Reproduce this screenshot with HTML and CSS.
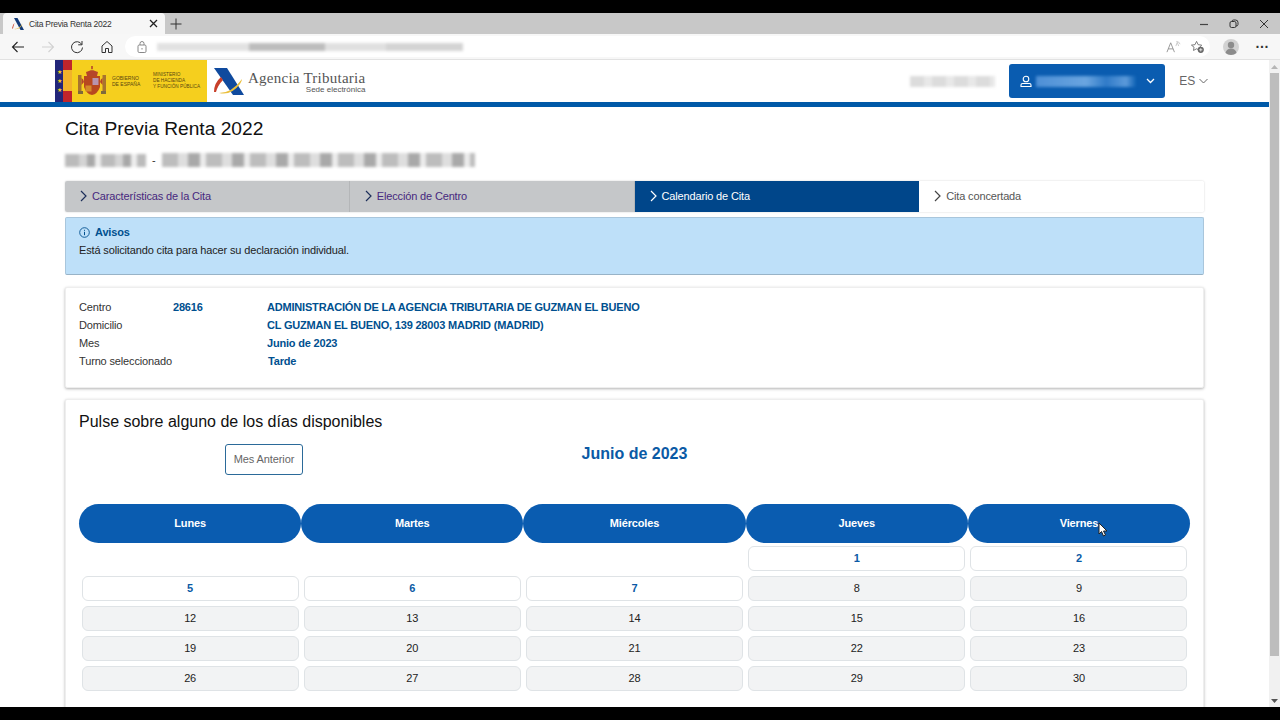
FILE: index.html
```html
<!DOCTYPE html>
<html lang="es">
<head>
  <meta charset="utf-8">
  <title>Cita Previa Renta 2022</title>
  <link rel="stylesheet" href="styles.css">
</head>
<body>
  <div class="window">

    <!-- browser tabs -->
    <div class="tabbar">
      <div class="tab">
        <svg class="favicon" width="14" height="14" viewBox="0 0 14 14">
          <path d="M3 1h3.500l6.500 12H9.500z" fill="#123a78"/>
          <path d="M1 11.500q.3-3.500 2.500-5.500-1 3-1.500 5.500z" fill="#c8452f"/>
          <path d="M3 12q5 0 8.500-5.500-2 6.500-8.500 5.500z" fill="#e8b93a"/>
        </svg>
        <span class="tab-title">Cita Previa Renta 2022</span>
        <svg class="tab-close" width="9" height="9" viewBox="0 0 9 9"><path d="M1 1l7 7M8 1l-7 7" stroke="#222" stroke-width="1.300"/></svg>
      </div>
      <svg class="tab-new" width="12" height="12" viewBox="0 0 12 12"><path d="M6 .5v11M.5 6h11" stroke="#333" stroke-width="1"/></svg>
      <div class="win-controls">
        <svg width="10" height="10" viewBox="0 0 10 10"><path d="M1 5.500h8" stroke="#444" stroke-width="1.200"/></svg>
        <svg width="10" height="10" viewBox="0 0 10 10"><rect x="1" y="2.500" width="6" height="6" rx="1.500" fill="none" stroke="#333"/><path d="M3 2.500q0-1.500 1.500-1.500h2q2.500 0 2.500 2.500v2q0 1.500-2 1.500" fill="none" stroke="#333"/></svg>
        <svg width="10" height="10" viewBox="0 0 10 10"><path d="M1 1l8 8M9 1l-8 8" stroke="#333" stroke-width="1"/></svg>
      </div>
    </div>

    <!-- browser toolbar -->
    <div class="toolbar">
      <div class="nav-icons">
        <svg width="14" height="14" viewBox="0 0 14 14"><path d="M13 7H1.500M6.500 2L1.500 7l5 5" fill="none" stroke="#222" stroke-width="1.100"/></svg>
        <svg width="14" height="14" viewBox="0 0 14 14"><path d="M1 7h11.500M7.500 2l5 5-5 5" fill="none" stroke="#d2d2d2" stroke-width="1.100"/></svg>
        <svg width="14" height="14" viewBox="0 0 14 14"><path d="M11.800 4.500A5.500 5.500 0 1 0 12.500 7.500M12 1v3.800H8.200" fill="none" stroke="#333" stroke-width="1"/></svg>
        <svg width="14" height="14" viewBox="0 0 14 14"><path d="M2 6l5-4.500L12 6v6.500H8.500V8.500h-3v4H2z" fill="none" stroke="#333" stroke-width="1" stroke-linejoin="round"/></svg>
      </div>
      <div class="addressbar">
        <svg width="10" height="12" viewBox="0 0 10 12"><rect x="1" y="4" width="8" height="7.500" rx="1.200" fill="none" stroke="#888"/><path d="M3 4V2.500q0-2 2-2t2 2V4" fill="none" stroke="#888"/><path d="M5 7v1.500" stroke="#888"/></svg>
        <div class="blur blur-url"></div>
        <div class="addr-right">
          <svg width="15" height="14" viewBox="0 0 16 14"><path d="M1 12.500L5 2.500l4 10M2.500 9h5" fill="none" stroke="#888" stroke-width=".9"/><path d="M10.500 6l1.500-4 1.500 4M11 1q3 0 4 3" fill="none" stroke="#bbb" stroke-width=".8"/></svg>
          <svg width="15" height="14" viewBox="0 0 16 15"><path d="M7 1.500l1.700 3.500 3.800.5-2.700 2.700.5 2.800-3.300-1.600-3.300 1.800.6-3.500L1.500 5.500l3.800-.5z" fill="none" stroke="#666" stroke-width=".9"/><circle cx="11.500" cy="10.500" r="3.300" fill="#666"/><path d="M11.500 8.700v3.600M9.700 10.500h3.600" stroke="#fff" stroke-width=".8"/></svg>
        </div>
      </div>
      <svg class="avatar" width="16" height="16" viewBox="0 0 16 16"><circle cx="8" cy="8" r="8" fill="#d2d2d2"/><circle cx="8" cy="6" r="3.200" fill="#8c8c8c"/><path d="M2.500 14q1-4.500 5.500-4.500t5.500 4.500q-2.500 2-5.500 2t-5.500-2z" fill="#8c8c8c"/></svg>
      <span class="more">&middot;&middot;&middot;</span>
    </div>

    <div class="viewport">
      <div class="page">

        <header class="site-header">
          <div class="gov-logo">
            <div class="flag"><span class="eu">
              <i>&#9733;</i><i>&#9733;</i><i>&#9733;</i></span><span class="stripes"></span></div>
            <svg class="arms" width="28" height="30" viewBox="0 0 28 30">
              <path d="M10 6q4-5 8 0l1 3H9z" fill="#c9842c"/>
              <path d="M13.200 0h1.600v3h-1.600z" fill="#b5452a"/>
              <path d="M8 6q6-3 12 0l-1 4H9z" fill="#b5452a"/>
              <rect x="0" y="9" width="3.500" height="16" fill="#a8742e"/>
              <rect x="24.500" y="9" width="3.500" height="16" fill="#a8742e"/>
              <path d="M3.500 12q2 1 2.500 4l-2.500 3zM24.500 12q-2 1-2.500 4l2.500 3z" fill="#b5452a"/>
              <path d="M6 10h16v11q-2.500 7-8 8-5.500-1-8-8z" fill="#b8481f"/>
              <rect x="14.500" y="12" width="6" height="7" fill="#b894ad"/>
              <rect x="7.500" y="19.500" width="6" height="6" fill="#d48a2a"/>
              <rect x="0" y="25" width="5" height="3" fill="#7d6a3c"/>
              <rect x="23" y="25" width="5" height="3" fill="#7d6a3c"/>
            </svg>
            <div class="gov-text gov-es">GOBIERNO<br>DE ESPAÑA</div>
            <div class="gov-text gov-min">MINISTERIO<br>DE HACIENDA<br>Y FUNCIÓN PÚBLICA</div>
          </div>
          <div class="aeat-logo">
            <svg width="32" height="30" viewBox="0 0 32 30">
              <path d="M1 2h13l17 27H20z" fill="#0f4a9e"/>
              <path d="M1 26q0-9 7-15l2 3q-5 5-7 12z" fill="#c8402a"/>
              <path d="M6 27q13 0 23-14 0 2-2 5-9 12-21 9z" fill="#eabf3c"/>
            </svg>
            <div class="aeat-text">
              <span class="aeat-name">Agencia Tributaria</span>
              <span class="aeat-sub">Sede electrónica</span>
            </div>
          </div>
          <div class="header-right">
            <div class="blur blur-user"></div>
            <div class="user-btn">
              <svg width="12" height="13" viewBox="0 0 12 13"><circle cx="6" cy="4" r="2.800" fill="none" stroke="#fff" stroke-width="1.100"/><path d="M2.500 8.500h7q1.500 0 1.500 1.500v1.500H1V10q0-1.500 1.500-1.500z" fill="none" stroke="#fff" stroke-width="1.100"/></svg>
              <div class="blur blur-name"></div>
              <svg class="chev" width="9" height="6" viewBox="0 0 9 6"><path d="M1 1l3.500 3.500L8 1" fill="none" stroke="#fff" stroke-width="1.300"/></svg>
            </div>
            <div class="lang">ES
              <svg width="9" height="6" viewBox="0 0 9 6"><path d="M.5 1l4 4 4-4" fill="none" stroke="#666" stroke-width="1"/></svg>
            </div>
          </div>
        </header>

        <main class="content">
          <h1 class="page-title">Cita Previa Renta 2022</h1>
          <div class="subject">
            <div class="blur blur-id"></div>
            <span>-</span>
            <div class="blur blur-desc"></div>
          </div>

          <nav class="steps">
            <a class="step done">
              <svg width="7" height="12" viewBox="0 0 7 12"><path d="M1 1l5 5-5 5" fill="none" stroke="#1d2f5a" stroke-width="1.200"/></svg>
              Características de la Cita</a>
            <a class="step done">
              <svg width="7" height="12" viewBox="0 0 7 12"><path d="M1 1l5 5-5 5" fill="none" stroke="#1d2f5a" stroke-width="1.200"/></svg>
              Elección de Centro</a>
            <a class="step active">
              <svg width="7" height="12" viewBox="0 0 7 12"><path d="M1 1l5 5-5 5" fill="none" stroke="#fff" stroke-width="1.200"/></svg>
              Calendario de Cita</a>
            <a class="step pending">
              <svg width="7" height="12" viewBox="0 0 7 12"><path d="M1 1l5 5-5 5" fill="none" stroke="#444" stroke-width="1.200"/></svg>
              Cita concertada</a>
          </nav>

          <div class="notice">
            <div class="notice-title">
              <svg width="11" height="11" viewBox="0 0 11 11"><circle cx="5.500" cy="5.500" r="4.800" fill="none" stroke="#00508f" stroke-width=".9"/><path d="M5.500 4.800v3.400M5.500 2.800v1" stroke="#00508f" stroke-width="1"/></svg>
              Avisos
            </div>
            <p>Está solicitando cita para hacer su declaración individual.</p>
          </div>

          <section class="card summary">
            <span>Centro</span><b>28616</b><b>ADMINISTRACIÓN DE LA AGENCIA TRIBUTARIA DE GUZMAN EL BUENO</b>
            <span>Domicilio</span><b></b><b>CL GUZMAN EL BUENO, 139 28003 MADRID (MADRID)</b>
            <span>Mes</span><b></b><b>Junio de 2023</b>
            <span>Turno seleccionado</span><b></b><b class="nudge">Tarde</b>
          </section>

          <section class="card calendar">
            <h2 class="cal-prompt">Pulse sobre alguno de los días disponibles</h2>
            <div class="cal-nav">
              <div class="cal-prev"><button class="btn-month">Mes Anterior</button></div>
              <div class="cal-month">Junio de 2023</div>
              <div></div>
            </div>
            <div class="cal-head">
              <div>Lunes</div><div>Martes</div><div>Miércoles</div><div>Jueves</div><div>Viernes</div>
            </div>
            <div class="cal-grid">
              <div class="day empty"></div><div class="day empty"></div><div class="day empty"></div>
              <div class="day free">1</div><div class="day free">2</div>
              <div class="day free">5</div><div class="day free">6</div><div class="day free">7</div>
              <div class="day">8</div><div class="day">9</div>
              <div class="day">12</div><div class="day">13</div><div class="day">14</div>
              <div class="day">15</div><div class="day">16</div>
              <div class="day">19</div><div class="day">20</div><div class="day">21</div>
              <div class="day">22</div><div class="day">23</div>
              <div class="day">26</div><div class="day">27</div><div class="day">28</div>
              <div class="day">29</div><div class="day">30</div>
            </div>
          </section>
        </main>
      </div>

      <div class="scrollbar">
        <svg width="7" height="4" viewBox="0 0 7 4"><path d="M3.500 0L7 4H0z" fill="#b5b5b5"/></svg>
        <div class="thumb"></div>
        <svg width="7" height="4" viewBox="0 0 7 4"><path d="M3.500 4L7 0H0z" fill="#555"/></svg>
      </div>
    </div>

    <!-- mouse pointer from the recording -->
    <svg class="pointer" width="10" height="15" viewBox="0 0 10 15"><path d="M1 1v11l2.500-2.500L5.500 14l2-1-2-4H9z" fill="#fff" stroke="#222" stroke-width="1"/></svg>
  </div>
</body>
</html>
```

FILE: styles.css
```css
* {
  box-sizing: border-box;
}

html, body {
  margin: 0;
  height: 720px;
  overflow: hidden;
  background-color: black;
}

body {
  padding: 13px 0;
  font-family: "Liberation Sans", Arial, sans-serif;
  font-size: 11px;
  letter-spacing: -.15px;
  color: #222;
}

.window {
  position: relative;
  height: 694px;
  display: flex;
  flex-direction: column;
  background-color: white;
  overflow: hidden;
}

/* browser chrome */
.tabbar {
  height: 21px;
  flex: none;
  display: flex;
  align-items: center;
  padding-left: 3px;
  background-color: #c8c8c8;
}

.tab {
  width: 162px;
  height: 21px;
  display: flex;
  align-items: center;
  padding: 0 7px 0 8px;
  background-color: #f6f6f6;
  border-radius: 4px 4px 0 0;
}

.favicon {
  flex: none;
}

.tab-title {
  margin-left: 4px;
  flex: 1;
  font-size: 8.500px;
  letter-spacing: -.25px;
  color: #333;
  white-space: nowrap;
}

.tab-new {
  margin-left: 5px;
}

.win-controls {
  margin-left: auto;
  display: flex;
  gap: 20px;
  padding-right: 11px;
}

.toolbar {
  height: 26px;
  flex: none;
  display: flex;
  align-items: center;
  padding-left: 11px;
  background-color: #f7f7f7;
  border-bottom: 1px solid #e2e2e2;
}

.nav-icons {
  display: flex;
  gap: 15.500px;
}

.addressbar {
  width: 1085px;
  height: 21px;
  margin-left: 11px;
  display: flex;
  align-items: center;
  padding: 0 5px 0 12px;
  background-color: white;
  border-radius: 11px;
}

.addr-right {
  margin-left: auto;
  display: flex;
  gap: 9px;
  align-items: center;
}

.avatar {
  margin-left: 13px;
}

.more {
  margin-left: 17px;
  font-size: 14px;
  font-weight: bold;
  line-height: 14px;
  color: #333;
}

/* blurred-out private data */
.blur {
  filter: blur(1.500px);
}

.blur-url {
  width: 306px;
  height: 8px;
  margin-left: 10px;
  background: linear-gradient(90deg, #e2e2e2 0 30%, #bdbdbd 30% 55%, #e0e0e0 55% 75%, #d4d4d4 75% 100%);
}

.blur-user {
  width: 85px;
  height: 11px;
  background: repeating-linear-gradient(90deg, #dcdcdc 0 14px, #e8e8e8 14px 22px);
}

.blur-name {
  width: 100px;
  height: 11px;
  margin-left: 4px;
  background: linear-gradient(90deg, #4d8fd6, #6aa5e0 50%, #2f7ac8 70%, #5c9ada 90%, #0f62b5);
}

.blur-id {
  width: 81px;
  height: 13px;
  background: repeating-linear-gradient(90deg, #bbb 0 14px, #d4d4d4 14px 22px, #a8a8a8 22px 30px, #eee 30px 36px);
}

.blur-desc {
  width: 313px;
  height: 14px;
  background: repeating-linear-gradient(90deg, #bdbdbd 0 16px, #dedede 16px 26px, #a9a9a9 26px 38px, #ececec 38px 44px);
}

/* page */
.viewport {
  flex: 1;
  min-height: 0;
  display: flex;
}

.page {
  flex: 1;
  min-width: 0;
  overflow: hidden;
}

.scrollbar {
  width: 11px;
  flex: none;
  display: flex;
  flex-direction: column;
  align-items: center;
  padding: 5px 0 4px;
  background-color: #f1f1f1;
}

.thumb {
  width: 9px;
  height: 583px;
  margin: 4px 0 auto;
  background-color: #bdbdbd;
}

.site-header {
  height: 47px;
  display: flex;
  padding-left: 55px;
  border-bottom: 5px solid #0059a8;
}

.gov-logo {
  width: 152px;
  display: flex;
  align-items: center;
  background-color: #f5cf1e;
  letter-spacing: 0;
}

.flag {
  width: 17px;
  height: 100%;
  display: flex;
}

.eu {
  width: 8px;
  display: flex;
  flex-direction: column;
  justify-content: center;
  gap: 3px;
  background-color: #22267a;
  color: #f5cf1e;
  font-size: 6px;
  line-height: 6px;
  text-align: center;
}

.eu i {
  font-style: normal;
}

.stripes {
  flex: 1;
  background: linear-gradient(#c0252b 0 25%, #f2b32a 25% 75%, #c0252b 75%);
}

.arms {
  margin-left: 6px;
}

.gov-text {
  font-size: 5px;
  line-height: 6px;
  color: #5a4710;
}

.gov-es {
  width: 41px;
  margin-left: 6px;
}

.gov-min {
  white-space: nowrap;
  font-size: 4.700px;
}

.aeat-logo {
  display: flex;
  align-items: center;
  gap: 3px;
  margin-left: 6px;
  letter-spacing: 0;
}

.aeat-text {
  margin-top: 3px;
  display: flex;
  flex-direction: column;
  align-items: flex-end;
}

.aeat-name {
  font-family: "Liberation Serif", "Times New Roman", serif;
  font-size: 15px;
  line-height: 15px;
  letter-spacing: .25px;
  color: #555;
}

.aeat-sub {
  font-size: 8px;
  line-height: 8px;
  color: #555;
}

.header-right {
  margin-left: auto;
  display: flex;
  align-items: center;
  padding-right: 61px;
}

.user-btn {
  width: 156px;
  height: 34px;
  margin: 0 0 0 14px;
  display: flex;
  align-items: center;
  padding: 0 10px 0 11px;
  background-color: #0a5cb0;
  border-radius: 3px;
}

.chev {
  margin-left: auto;
}

.lang {
  margin-left: 14px;
  display: flex;
  align-items: center;
  gap: 4px;
  font-size: 12px;
  color: #666;
}

.content {
  width: 1139px;
  margin-left: 65px;
}

.page-title {
  margin: 10px 0 0;
  font-size: 19.200px;
  font-weight: normal;
  line-height: 24px;
  letter-spacing: 0;
  color: #111;
}

.subject {
  height: 16px;
  margin-top: 11px;
  display: flex;
  align-items: center;
  gap: 6px;
  color: #333;
}

.steps {
  height: 31px;
  margin-top: 13px;
  display: grid;
  grid-template-columns: repeat(4, 1fr);
  border-radius: 2px;
  overflow: hidden;
  box-shadow: 0 0 2px rgba(0, 0, 0, .2);
}

.step {
  display: flex;
  align-items: center;
  gap: 5px;
  padding: 0 0 1px 15px;
}

.step.done {
  background-color: #c5c7c9;
  color: #47287e;
  border-right: 1px solid #b4b6b8;
}

.step.active {
  background-color: #00468a;
  color: white;
}

.step.pending {
  background-color: white;
  color: #555;
}

.notice {
  height: 58px;
  margin-top: 5px;
  padding: 7px 13px;
  background-color: #bee0f9;
  border: 1px solid #a9c6dc;
  border-bottom-color: #98b3c7;
  border-radius: 2px;
}

.notice-title {
  display: flex;
  align-items: center;
  gap: 5px;
  font-weight: bold;
  color: #00508f;
  line-height: 14px;
}

.notice p {
  margin: 4px 0 0;
  line-height: 15px;
  color: #222;
}

.card {
  background-color: white;
  border: 1px solid #eee;
  border-radius: 2px;
  box-shadow: 0 1px 3px rgba(0, 0, 0, .3);
}

.summary {
  height: 101px;
  margin-top: 12px;
  display: grid;
  grid-template-columns: 94px 94px 1fr;
  grid-auto-rows: 18px;
  align-items: center;
  padding: 10px 13px;
  white-space: nowrap;
  color: #333;
}

.summary b {
  letter-spacing: -.19px;
  color: #00508f;
}

.summary .nudge {
  padding-left: 1px;
}

.calendar {
  margin-top: 11px;
  padding: 12px 13px 40px;
}

.cal-prompt {
  margin: 0;
  font-size: 16px;
  font-weight: normal;
  line-height: 20px;
  letter-spacing: 0;
  color: #111;
}

.cal-nav {
  margin-top: 12px;
  display: grid;
  grid-template-columns: 1fr auto 1fr;
}

.cal-prev {
  padding-left: 146px;
}

.btn-month {
  width: 78px;
  height: 31px;
  padding: 0 0 2px;
  background-color: white;
  border: 1px solid #2b6a99;
  border-radius: 3px;
  font-family: inherit;
  font-size: 11px;
  letter-spacing: -.1px;
  color: #666;
}

.cal-month {
  padding-top: 1px;
  font-size: 16px;
  font-weight: bold;
  line-height: 18px;
  letter-spacing: 0;
  color: #0a5aa5;
}

.cal-head {
  margin-top: 29px;
  display: grid;
  grid-template-columns: repeat(5, 1fr);
}

.cal-head div {
  height: 39px;
  display: flex;
  align-items: center;
  justify-content: center;
  padding-bottom: 1px;
  background-color: #0a5cb0;
  border-radius: 20px;
  font-weight: bold;
  color: white;
}

.cal-grid {
  margin-top: 3px;
  display: grid;
  grid-template-columns: repeat(5, 1fr);
  grid-auto-rows: 25px;
  row-gap: 5px;
}

.day {
  margin: 0 2.500px;
  display: flex;
  align-items: center;
  justify-content: center;
  padding-bottom: 1px;
  background-color: #f2f3f4;
  border: 1px solid #dfe3e6;
  border-radius: 6px;
  color: #222;
}

.day.free {
  background-color: white;
  font-weight: bold;
  color: #0a5aa5;
}

.day.empty {
  visibility: hidden;
}

.pointer {
  position: absolute;
  left: 1098px;
  top: 509px;
}
```
